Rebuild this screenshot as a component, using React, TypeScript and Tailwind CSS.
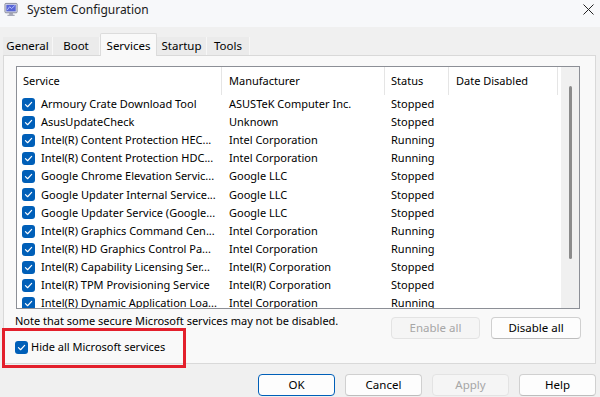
import React from 'react'

// ================================
// INTERFACES & TYPES
// ================================

interface ServiceRow {
  name: string
  maker: string
  status: string
}

// ================================
// CONSTANTS
// ================================

const FONT = { fontFamily: '"Segoe UI", "Noto Sans", "Liberation Sans", sans-serif' }

const TABS = ['General', 'Boot', 'Services', 'Startup', 'Tools']
const TAB_WIDTHS: Record<string, string> = {
  General: 'w-[50px]',
  Boot: 'w-[47px]',
  Services: 'w-[57px]',
  Startup: 'w-[50px]',
  Tools: 'w-[43px]',
}

const SERVICES: ServiceRow[] = [
  { name: 'Armoury Crate Download Tool', maker: 'ASUSTeK Computer Inc.', status: 'Stopped' },
  { name: 'AsusUpdateCheck', maker: 'Unknown', status: 'Stopped' },
  { name: 'Intel(R) Content Protection HEC...', maker: 'Intel Corporation', status: 'Running' },
  { name: 'Intel(R) Content Protection HDC...', maker: 'Intel Corporation', status: 'Running' },
  { name: 'Google Chrome Elevation Servic...', maker: 'Google LLC', status: 'Stopped' },
  { name: 'Google Updater Internal Service...', maker: 'Google LLC', status: 'Stopped' },
  { name: 'Google Updater Service (Google...', maker: 'Google LLC', status: 'Stopped' },
  { name: 'Intel(R) Graphics Command Cen...', maker: 'Intel Corporation', status: 'Running' },
  { name: 'Intel(R) HD Graphics Control Pa...', maker: 'Intel Corporation', status: 'Running' },
  { name: 'Intel(R) Capability Licensing Ser...', maker: 'Intel(R) Corporation', status: 'Stopped' },
  { name: 'Intel(R) TPM Provisioning Service', maker: 'Intel(R) Corporation', status: 'Stopped' },
  { name: 'Intel(R) Dynamic Application Loa...', maker: 'Intel Corporation', status: 'Running' },
]

// ================================
// SMALL PIECES
// ================================

const CheckBox: React.FC = () => (
  <span className="w-[13px] h-[13px] rounded-[3px] bg-[#005fb8] flex items-center justify-center shrink-0">
    <svg width="9" height="9" viewBox="0 0 10 10" fill="none">
      <path d="M1.6 5.2 L4 7.5 L8.5 2.6" stroke="white" strokeWidth="1.3" strokeLinecap="round" strokeLinejoin="round" />
    </svg>
  </span>
)

const AppIcon: React.FC = () => (
  <svg width="15" height="15" viewBox="0 0 16 16">
    <rect x="1" y="1.5" width="13" height="10" rx="1" fill="#d9dbe6" stroke="#6b6f86" strokeWidth="0.8" />
    <rect x="2.5" y="3" width="10" height="7" fill="#5865d6" />
    <path d="M3.5 8.5 L6 5 L8 7 L11.5 3.8" stroke="#b9c2ff" strokeWidth="1" fill="none" />
    <rect x="5.5" y="12" width="4" height="1.5" fill="#8c8fa3" />
    <rect x="3.5" y="13.5" width="8" height="1.2" rx="0.5" fill="#8c8fa3" />
  </svg>
)

const Button: React.FC<{ label: string; width: string; disabled?: boolean; primary?: boolean }> = ({
  label,
  width,
  disabled,
  primary,
}) => {
  let look = 'bg-[#fdfdfd] border border-[#d0d0d0] border-b-[#bdbdbd] text-black'
  if (disabled) look = 'bg-[#f5f5f5] border border-[#e3e3e3] text-[#a6a6a6]'
  if (primary) look = 'bg-[#fdfdfd] border-[1.5px] border-[#005fb8] text-black'
  return (
    <div className={`${width} h-[22px] rounded-[4px] flex items-center justify-center text-[11.5px] ${look}`}>
      {label}
    </div>
  )
}

// ================================
// MAIN COMPONENT
// ================================

const App: React.FC = () => {
  const renderTitleBar = () => (
    <div className="h-[27px] bg-[#f7f8fa] flex items-start pt-[2px] pl-[4px] pr-[6px]">
      <AppIcon />
      <span className="ml-[8px] text-[12px] leading-[16px] text-[#1a1a1a]">System Configuration</span>
      <div className="flex-1" />
      <svg width="11" height="11" viewBox="0 0 11 11" className="mt-[2px]">
        <path d="M0.5 0.5 L10.5 10.5 M10.5 0.5 L0.5 10.5" stroke="#222" strokeWidth="1" />
      </svg>
    </div>
  )

  const renderTabs = () => (
    <div className="h-[28px] flex items-end pl-[3px] relative z-10">
      {TABS.map((tab) =>
        tab === 'Services' ? (
          <div
            key={tab}
            className={`${TAB_WIDTHS[tab]} h-[23px] -mb-px bg-[#f9f9f9] border border-b-0 border-[#dcdcdc] rounded-t-[2px] flex items-start justify-center pt-[3px] text-[11.5px] text-black`}
          >
            {tab}
          </div>
        ) : (
          <div
            key={tab}
            className={`${TAB_WIDTHS[tab]} h-[18px] bg-[#ebebeb] border-r border-[#f7f7f7] flex items-center justify-center text-[11.5px] text-black`}
          >
            {tab}
          </div>
        ),
      )}
    </div>
  )

  const renderList = () => (
    <div className="w-[564px] h-[243px] border border-[#8c8f96] bg-white flex overflow-hidden">
      <div className="flex-1 flex flex-col">
        <div className="h-[28px] flex text-[11px] text-black shrink-0">
          <div className="w-[205px] pl-[6px] flex items-center border-r border-[#e5e5e5]">Service</div>
          <div className="w-[163px] pl-[7px] flex items-center border-r border-[#e5e5e5]">Manufacturer</div>
          <div className="w-[64px] pl-[6px] flex items-center border-r border-[#e5e5e5]">Status</div>
          <div className="w-[109px] pl-[7px] flex items-center border-r border-[#e5e5e5]">Date Disabled</div>
        </div>
        {SERVICES.map((s) => (
          <div key={s.name} className="h-[18.15px] flex items-center text-[11px] text-black shrink-0 whitespace-nowrap">
            <div className="w-[205px] pl-[5px] flex items-center gap-[6px] overflow-hidden">
              <CheckBox />
              <span>{s.name}</span>
            </div>
            <div className="w-[163px] pl-[7px] overflow-hidden">{s.maker}</div>
            <div className="w-[64px] pl-[6px]">{s.status}</div>
          </div>
        ))}
      </div>
      <div className="w-[18px] bg-[#f0f0f0] flex justify-center pt-[19px]">
        <div className="w-[3px] h-[173px] rounded-full bg-[#8b8b8b]" />
      </div>
    </div>
  )

  return (
    <div className="w-[600px] h-[397px] bg-[#f0f0f0] overflow-hidden relative text-black" style={FONT}>
      {renderTitleBar()}
      {renderTabs()}

      <div className="ml-[3px] w-[593px] h-[309px] border border-[#d9d9d9] bg-[#f9f9f9] pl-[12px] pt-[10px]">
        {renderList()}
        <div className="flex justify-between pr-[14px] mt-[4px]">
          <div className="flex flex-col -ml-[1px]">
            <span className="text-[11px] leading-[16px]">Note that some secure Microsoft services may not be disabled.</span>
            <div className="mt-[10px] h-[16px] flex items-center gap-[3px]">
              <CheckBox />
              <span className="text-[11px]">Hide all Microsoft services</span>
            </div>
          </div>
          <div className="flex gap-[11px] mt-[4px]">
            <Button label="Enable all" width="w-[89px]" disabled />
            <Button label="Disable all" width="w-[90px]" />
          </div>
        </div>
      </div>

      <div className="flex justify-end gap-[10px] pr-[4px] mt-[10px]">
        <Button label="OK" width="w-[77px]" primary />
        <Button label="Cancel" width="w-[77px]" />
        <Button label="Apply" width="w-[77px]" disabled />
        <Button label="Help" width="w-[77px]" />
      </div>

      {/* annotation box over the checkbox */}
      <div className="absolute left-[2px] top-[328px] w-[184px] h-[40px] border-[3px] border-[#e3202c] pointer-events-none" />
    </div>
  )
}

export default App
